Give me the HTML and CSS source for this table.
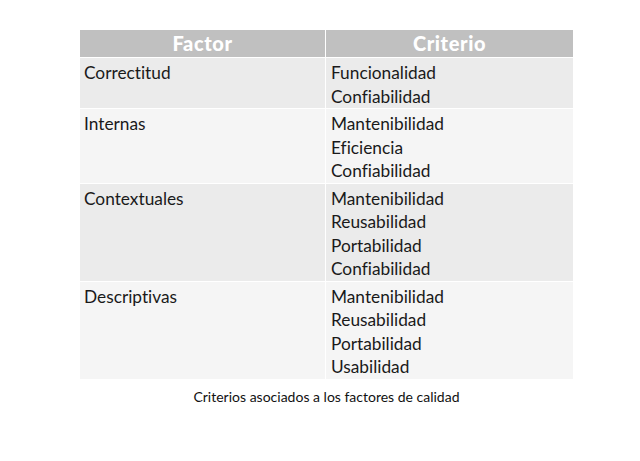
FILE: index.html
```html
<!DOCTYPE html>
<html lang="es">
<head>
<meta charset="utf-8">
<link rel="stylesheet" href="styles.css">
</head>
<body>
<figure class="fig">
  <table class="tbl">
    <thead>
      <tr><th>Factor</th><th>Criterio</th></tr>
    </thead>
    <tbody>
      <tr class="odd"><td>Correctitud</td><td>Funcionalidad<br>Confiabilidad</td></tr>
      <tr class="even"><td>Internas</td><td>Mantenibilidad<br>Eficiencia<br>Confiabilidad</td></tr>
      <tr class="odd"><td>Contextuales</td><td>Mantenibilidad<br>Reusabilidad<br>Portabilidad<br>Confiabilidad</td></tr>
      <tr class="even"><td>Descriptivas</td><td>Mantenibilidad<br>Reusabilidad<br>Portabilidad<br>Usabilidad</td></tr>
    </tbody>
  </table>
  <figcaption class="cap">Criterios asociados a los factores de calidad</figcaption>
</figure>
</body>
</html>
```
FILE: styles.css
```css
html, body { margin: 0; padding: 0; background: #fff; }
body {
  font-family: Lato, "Open Sans", sans-serif; color: #1a1a1a;
  font-variant-ligatures: none;
}
.fig { margin: 0; padding: 30px 0 0 80px; width: 493px; }
.tbl { border-collapse: collapse; width: 493px; table-layout: fixed; }
.tbl th:first-child, .tbl td:first-child { width: 245px; }
.tbl th {
  background: #c0c0c0; color: #fff; font-weight: 900; font-size: 20px;
  letter-spacing: 0.6px;
  height: 27px; padding: 0; line-height: 27px; text-align: center;
  border-left: 1px solid #fff;
}
.tbl th:first-child { border-left: 0; }
.tbl td {
  vertical-align: top; font-size: 17.3px; line-height: 23.5px;
  padding: 3px 4px 0 5px; border-top: 1px solid #fff; border-left: 1px solid #fff;
}
.tbl td:first-child { border-left: 0; padding-left: 4px; }
.odd td { background: #ebebeb; }
.even td { background: #f5f5f5; }
.cap { text-align: center; font-size: 14px; margin-top: 9px; color: #111; }
```
